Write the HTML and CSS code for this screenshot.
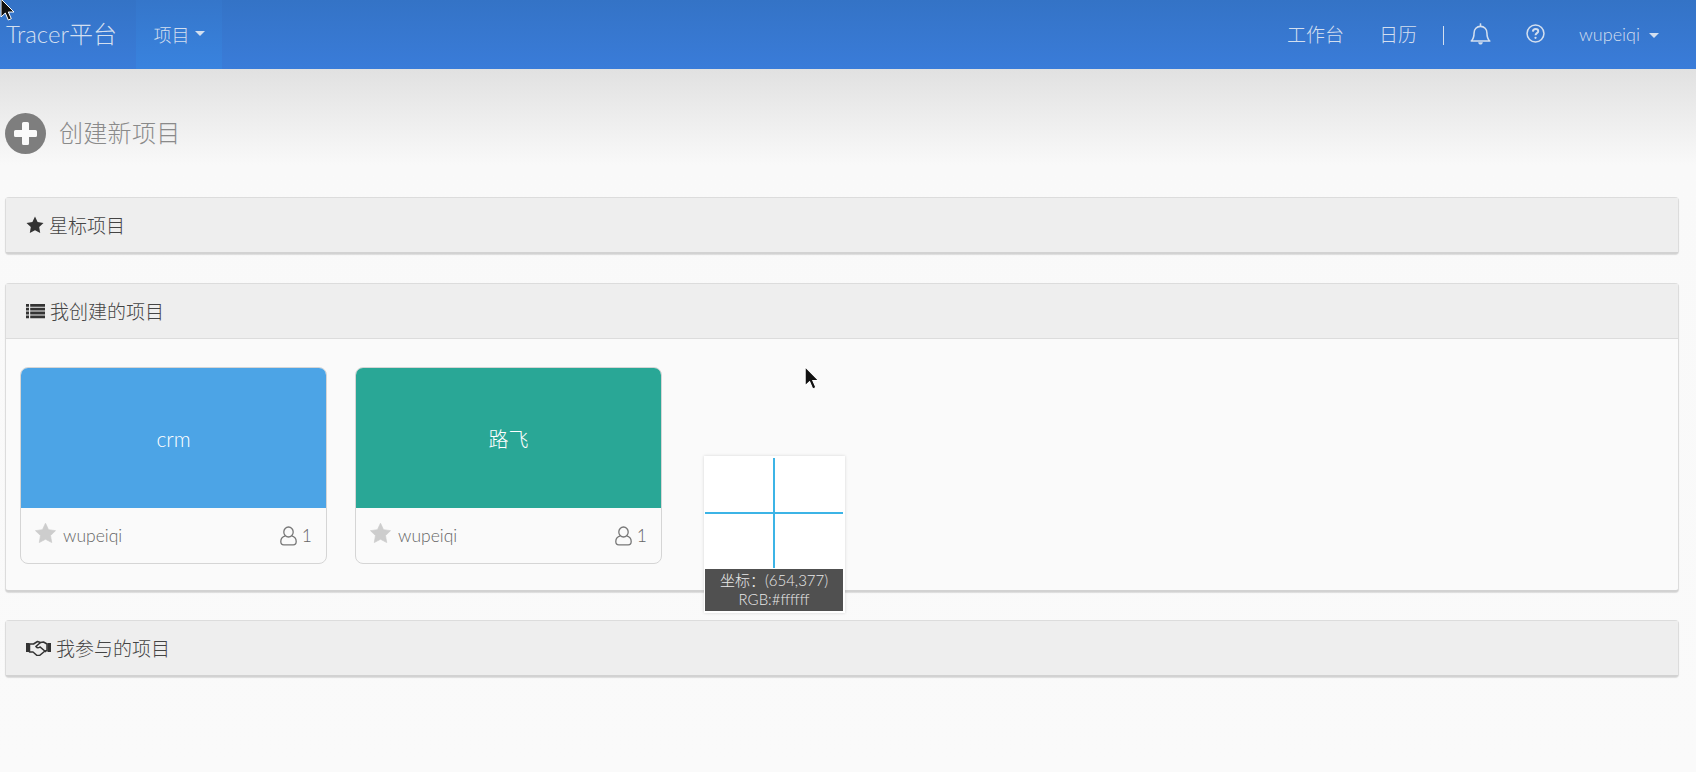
FILE: index.html
```html
<!DOCTYPE html>
<html lang="zh-CN">
<head>
  <meta charset="UTF-8" />
  <title>Tracer平台</title>
  <link rel="stylesheet" href="styles.css">
</head>
<body>
  <nav>
    <div class="nav-left">
      <a class="brand" href="#">Tracer平台</a>
      <a class="nav-item active" href="#">项目<span class="caret"></span></a>
    </div>
    <div class="nav-right">
      <a class="nav-link" href="#">工作台</a>
      <a class="nav-link" href="#">日历</a>
      <span class="nav-sep"></span>
      <a class="nav-icon bell" href="#">
        <svg width="21" height="24" viewBox="1.500 0 19 22" fill="none" stroke="currentColor" stroke-width="1.400"><path d="M2.500 17.500c2-2 2.600-4 2.600-7.500 0-3.300 2.400-6 5.900-6s5.900 2.700 5.900 6c0 3.500.6 5.500 2.600 7.500z" stroke-linejoin="round"/><path d="M11 1.200v2.600"/><path d="M8.800 18.500c.3 1.500 1.100 2.200 2.200 2.200s1.900-.7 2.200-2.200z" fill="currentColor" stroke="none"/></svg>
      </a>
      <a class="nav-icon help" href="#">
        <svg width="19" height="19" viewBox="0 0 20 20" fill="none" stroke="currentColor" stroke-width="1.600"><circle cx="10" cy="10" r="8.900"/><path d="M7.200 8c.1-1.800 1.300-2.800 2.900-2.800 1.700 0 2.800 1 2.800 2.300 0 2.100-2.900 2.100-2.900 4.300" stroke-width="2"/><circle cx="10" cy="14.600" r="1.200" fill="currentColor" stroke="none"/></svg>
      </a>
      <a class="nav-user" href="#">wupeiqi<span class="caret"></span></a>
    </div>
  </nav>

  <main>
    <a class="create" href="#">
      <svg class="create-icon" width="41" height="41" viewBox="0 0 41 41"><circle cx="20.500" cy="20.500" r="20.500" fill="#7e7e7e"/><path d="M17 10.500a1.500 1.500 0 0 1 1.500-1.500h4a1.500 1.500 0 0 1 1.500 1.500V17h6.500a1.500 1.500 0 0 1 1.500 1.500v4a1.500 1.500 0 0 1-1.500 1.500H24v6.500a1.500 1.500 0 0 1-1.500 1.500h-4a1.500 1.500 0 0 1-1.500-1.500V24h-6.500A1.500 1.500 0 0 1 9 22.500v-4A1.500 1.500 0 0 1 10.500 17H17z" fill="#fafafa"/></svg>
      <span>创建新项目</span>
    </a>

    <section class="panel">
      <div class="panel-heading">
        <svg class="head-icon" width="18" height="18" viewBox="0 0 18 18"><path d="M9 .6l2.600 5.500 5.900.8-4.300 4.200 1 6L9 14.200 3.800 17.100l1-6L.5 6.900l5.900-.8z" fill="#333"/></svg>
        <span>星标项目</span>
      </div>
    </section>

    <section class="panel panel-list">
      <div class="panel-heading">
        <svg class="head-icon" width="19" height="16" viewBox="0 0 19 16" fill="#333"><path d="M0 1h3v2.800H0zM4.200 1H19v2.800H4.200zM0 4.800h3v2.800H0zM4.200 4.800H19v2.800H4.200zM0 8.600h3v2.800H0zM4.200 8.600H19v2.800H4.200zM0 12.400h3v2.800H0zM4.200 12.400H19v2.800H4.200z"/></svg>
        <span>我创建的项目</span>
      </div>
      <div class="panel-body">
        <div class="card">
          <div class="card-cover blue">crm</div>
          <div class="card-foot">
            <div class="owner">
              <svg class="star" width="23" height="22" viewBox="0 0 18 18"><path d="M9 1l2.500 5.300 5.700.8-4.100 4 1 5.700L9 14.100l-5.100 2.700 1-5.700-4.100-4 5.700-.8z" fill="#cdcdcd" stroke="#cdcdcd" stroke-width=".6" stroke-linejoin="round"/></svg>
              <span>wupeiqi</span>
            </div>
            <div class="members">
              <svg width="17" height="20" viewBox="0 0 17 20" fill="none" stroke="#777" stroke-width="1.300"><ellipse cx="8.500" cy="6" rx="4.700" ry="5"/><path d="M5.300 9.800C2.800 10.500.8 12.500.8 15.400c0 2.200 1.100 3.400 3 3.400h9.400c1.900 0 3-1.200 3-3.400 0-2.900-2-4.900-4.500-5.600"/></svg>
              <span>1</span>
            </div>
          </div>
        </div>
        <div class="card">
          <div class="card-cover green">路飞</div>
          <div class="card-foot">
            <div class="owner">
              <svg class="star" width="23" height="22" viewBox="0 0 18 18"><path d="M9 1l2.500 5.300 5.700.8-4.100 4 1 5.700L9 14.100l-5.100 2.700 1-5.700-4.100-4 5.700-.8z" fill="#cdcdcd" stroke="#cdcdcd" stroke-width=".6" stroke-linejoin="round"/></svg>
              <span>wupeiqi</span>
            </div>
            <div class="members">
              <svg width="17" height="20" viewBox="0 0 17 20" fill="none" stroke="#777" stroke-width="1.300"><ellipse cx="8.500" cy="6" rx="4.700" ry="5"/><path d="M5.300 9.800C2.800 10.500.8 12.500.8 15.400c0 2.200 1.100 3.400 3 3.400h9.400c1.900 0 3-1.200 3-3.400 0-2.900-2-4.900-4.500-5.600"/></svg>
              <span>1</span>
            </div>
          </div>
        </div>
      </div>
    </section>

    <section class="panel">
      <div class="panel-heading">
        <svg class="head-icon" width="25" height="16" viewBox="0 0 25 16"><path d="M0 3h3.500v9H0zM21.500 3H25v9h-3.500z" fill="#333"/><path d="M3.500 4h4l4-2.500 3 1 3-.5 3.500 2v6.500l-2 .5-5.500 4.500h-2.500L7 12H3.500z" fill="none" stroke="#333" stroke-width="1.500" stroke-linejoin="round"/><path d="M14.500 2.500L10 6.500c1 1.500 2.500 1.500 4 .5l6 5" fill="none" stroke="#333" stroke-width="1.500"/></svg>
        <span>我参与的项目</span>
      </div>
    </section>
  </main>

  <div class="picker">
    <div class="picker-view"></div>
    <div class="picker-info">坐标：(654,377)<br>RGB:#ffffff</div>
  </div>

  <svg class="cursor cursor-top" width="18" height="24" viewBox="0 0 18 24"><path d="M1 0v18l4.300-4 3 7 3-1.300-3-6.700H14z" fill="#111" stroke="#fff" stroke-width="1"/></svg>
  <svg class="cursor cursor-mid" width="19" height="25" viewBox="0 0 18 24"><path d="M1 0v18l4.300-4 3 7 3-1.300-3-6.700H14z" fill="#111" stroke="#fff" stroke-width="1"/></svg>
</body>
</html>
```

FILE: styles.css
```css
* {
  box-sizing: border-box;
}
html, body {
  height: 100%;
}
body {
  margin: 0;
  overflow: hidden;
  font-family: "Lato", "Noto Sans CJK SC", sans-serif;
  font-weight: 300;
  font-size: 19px;
  color: #555;
  background: linear-gradient(to bottom, #e1e1e1 69px, #f9f9f9 165px, #fafafa 100%);
}
a {
  text-decoration: none;
  color: inherit;
}
nav {
  height: 69px;
  display: flex;
  justify-content: space-between;
  align-items: stretch;
  background: linear-gradient(to bottom, #3473c6, #3a7cd9);
  color: #d3dfef;
}
.nav-left, .nav-right {
  display: flex;
  align-items: center;
}
.nav-left {
  align-items: stretch;
}
.brand {
  display: flex;
  align-items: center;
  width: 136px;
  padding: 0 0 4px 6px;
  font-size: 24px;
}
.nav-item {
  display: flex;
  align-items: center;
  justify-content: center;
  width: 86px;
  padding-bottom: 2px;
  font-size: 18px;
}
.nav-item.active {
  background: linear-gradient(to bottom, #3576ca, #3983df);
}
.caret {
  display: inline-block;
  width: 0;
  height: 0;
  margin-left: 5px;
  border-top: 5px solid currentColor;
  border-left: 5px solid transparent;
  border-right: 5px solid transparent;
}
.nav-right {
  padding: 0 37px 2px 0;
}
.nav-link + .nav-link {
  margin-left: 35px;
}
.nav-sep {
  width: 1px;
  height: 19px;
  background: #d3dfef;
  margin: 3px 26px 0;
}
.nav-icon {
  display: flex;
  margin-right: 35px;
}
.nav-icon.help {
  margin-right: 34px;
}
.nav-user {
  font-size: 18px;
}
.nav-user .caret {
  margin-left: 9px;
  vertical-align: 3px;
}
main {
  padding: 44px 17px 0 5px;
}
.create {
  display: flex;
  align-items: center;
  gap: 13px;
  height: 41px;
  font-size: 24px;
  letter-spacing: 0.3px;
  color: #8a8a8a;
  margin-bottom: 43px;
}
.create span {
  margin-bottom: 4px;
}
.panel {
  border: 1px solid #dcdcdc;
  border-bottom: 2px solid #d2d2d2;
  border-radius: 4px;
  background: #fafafa;
  box-shadow: 0 1px 1px rgba(0, 0, 0, 0.12);
  margin-bottom: 29px;
}
.panel-list {
  margin-bottom: 28px;
}
.panel-heading {
  display: flex;
  align-items: center;
  gap: 5px;
  height: 54px;
  padding-left: 20px;
  background: #eeeeee;
  color: #444;
}
.panel-heading span {
  margin-bottom: 2px;
}
.panel-heading + .panel-body {
  border-top: 1px solid #dcdcdc;
}
.panel-body {
  display: flex;
  gap: 28px;
  padding: 28px 13px 26px 14px;
}
.card {
  width: 307px;
  height: 197px;
  border: 1px solid #d5d5d5;
  border-radius: 8px;
  overflow: hidden;
  display: flex;
  flex-direction: column;
}
.card-cover {
  height: 140px;
  display: flex;
  align-items: center;
  justify-content: center;
  color: #fff;
  font-size: 20px;
}
.blue {
  background: #4ca4e6;
  font-size: 21px;
}
.green {
  background: #29a796;
}
.card-foot {
  flex: 1;
  display: flex;
  align-items: center;
  justify-content: space-between;
  padding: 0 14px 0 13px;
  color: #666;
  font-size: 17.500px;
}
.owner, .members {
  display: flex;
  align-items: center;
  gap: 5px;
}
.owner {
  gap: 6px;
}
.star {
  margin-bottom: 5px;
}
.picker {
  position: absolute;
  left: 704px;
  top: 456px;
  width: 141px;
  height: 157px;
  padding: 2px 2px 2px 1px;
  background: #fff;
  box-shadow: 0 0 3px rgba(0, 0, 0, 0.15);
  display: flex;
  flex-direction: column;
  gap: 1px;
}
.picker-view {
  flex: 1;
  background:
    linear-gradient(#3cb4e6, #3cb4e6) center / 100% 2px no-repeat,
    linear-gradient(#3cb4e6, #3cb4e6) center / 2px 100% no-repeat;
}
.picker-info {
  height: 42px;
  background: #505050;
  color: #e8e8e8;
  font-size: 15px;
  line-height: 19px;
  text-align: center;
  padding-top: 2px;
}
.cursor {
  position: absolute;
}
.cursor-top {
  left: 0;
  top: -1px;
}
.cursor-mid {
  left: 804px;
  top: 367px;
}
```
